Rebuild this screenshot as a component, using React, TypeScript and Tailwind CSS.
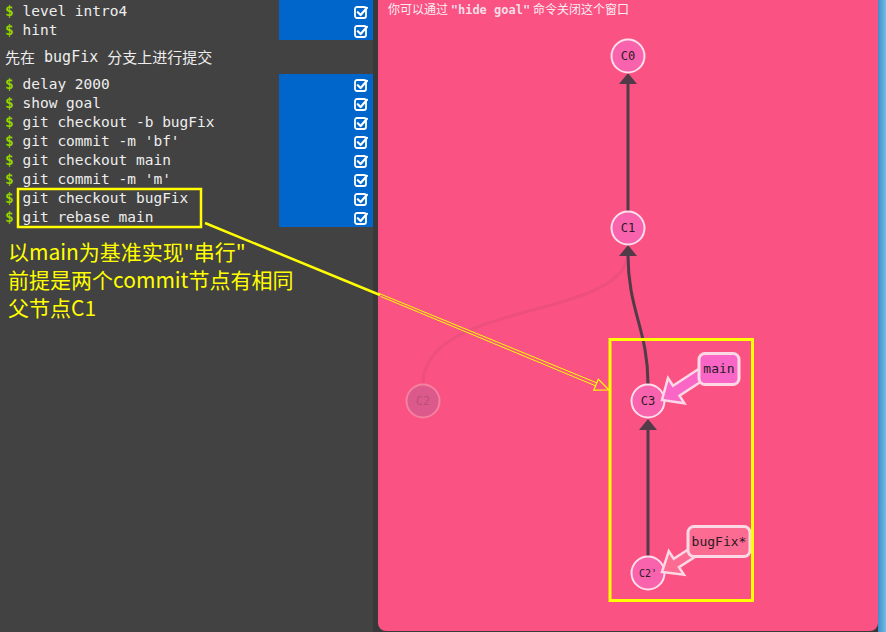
import React from "react";

const MONO = "font-['DejaVu_Sans_Mono','Noto_Sans_CJK_SC',monospace]";
const CJK = "font-['Noto_Sans_CJK_SC','Noto_Sans',sans-serif]";

function Check() {
  return (
    <svg width="14" height="14" viewBox="0 0 14 14">
      <rect x="1" y="2" width="11" height="11" rx="2" fill="none" stroke="#fff" strokeWidth="1.8" />
      <path d="M3.8 7.2 L6.6 10 L13 2.8" fill="none" stroke="#fff" strokeWidth="2.2" strokeLinecap="round" strokeLinejoin="round" />
    </svg>
  );
}

function Group({ cmds, pad }: { cmds: string[]; pad: string }) {
  return (
    <div className="flex">
      <div className={`flex flex-1 flex-col ${pad}`}>
        {cmds.map((c) => (
          <div key={c} className={`flex h-[19px] items-center whitespace-pre pl-[5px] text-[14.5px] leading-none text-[#eeeeee] ${MONO}`}>
            <span className="font-bold text-[#96d400]">$</span>
            <span> {c}</span>
          </div>
        ))}
      </div>
      <div className={`flex w-[94px] flex-col bg-[#0066cc] pr-[5px] ${pad}`}>
        {cmds.map((c) => (
          <div key={c} className="flex h-[19px] items-center justify-end">
            <Check />
          </div>
        ))}
      </div>
    </div>
  );
}

function arrowPts(sx: number, sy: number, tx: number, ty: number, bh: number, hh: number, hl: number) {
  const dx = tx - sx;
  const dy = ty - sy;
  const len = Math.hypot(dx, dy);
  const ux = dx / len;
  const uy = dy / len;
  const nx = -uy;
  const ny = ux;
  const hx = tx - ux * hl;
  const hy = ty - uy * hl;
  const p = [
    [sx + nx * bh, sy + ny * bh],
    [hx + nx * bh, hy + ny * bh],
    [hx + nx * hh, hy + ny * hh],
    [tx, ty],
    [hx - nx * hh, hy - ny * hh],
    [hx - nx * bh, hy - ny * bh],
    [sx - nx * bh, sy - ny * bh],
  ];
  return p.map((q) => q[0].toFixed(1) + "," + q[1].toFixed(1)).join(" ");
}

function Node({ x, y, label, small }: { x: number; y: number; label: string; small?: boolean }) {
  return (
    <g>
      <circle cx={x} cy={y} r={16.5} fill="#f963ad" stroke="#fde0ec" strokeWidth={2} />
      <text x={x} y={y + 4} textAnchor="middle" fontSize={small ? 10 : 12} fill="#2b1a24" className={MONO}>
        {label}
      </text>
    </g>
  );
}

export default function App() {
  const cmds1 = ["level intro4", "hint"];
  const cmds2 = [
    "delay 2000",
    "show goal",
    "git checkout -b bugFix",
    "git commit -m 'bf'",
    "git checkout main",
    "git commit -m 'm'",
    "git checkout bugFix",
    "git rebase main",
  ];
  const edge = "#523b48";
  return (
    <div className="relative flex h-[632px] w-[886px] overflow-hidden bg-[#393939]">
      <div className="flex w-[373px] flex-col bg-[#424242]">
        <Group cmds={cmds1} pad="pt-[2px]" />
        <div className={`flex h-[34px] items-center whitespace-pre pl-[5px] text-[15px] text-[#eeeeee] ${MONO}`}>
          <span className={CJK}>先在</span>
          <span> bugFix </span>
          <span className={CJK}>分支上进行提交</span>
        </div>
        <Group cmds={cmds2} pad="pt-[1px]" />
        <div className={`pl-[8px] pt-[10px] text-[21px] leading-[28px] text-[#ffff00] ${CJK}`}>
          <div>以main为基准实现"串行"</div>
          <div>前提是两个commit节点有相同</div>
          <div>父节点C1</div>
        </div>
      </div>
      <div className="w-[5px]" />
      <div className="relative h-[631px] w-[500px] rounded-b-[8px] bg-[#fa5283]">
        <svg className="absolute inset-0" width="500" height="631" viewBox="378 0 500 631">
          <path d="M423,384 C423,300 628,320 628,252" fill="none" stroke="#5a3048" strokeOpacity={0.08} strokeWidth={3} />
          <line x1={628} y1={84} x2={628} y2={211} stroke={edge} strokeWidth={3} />
          <polygon points="628,73 619,84 637,84" fill={edge} />
          <path d="M648,384 C648,330 628,310 628,255" fill="none" stroke={edge} strokeWidth={3} />
          <polygon points="628,245 619,256 637,256" fill={edge} />
          <line x1={648} y1={429} x2={648} y2={556} stroke={edge} strokeWidth={3} />
          <polygon points="648,419 639,430 657,430" fill={edge} />
          <Node x={628} y={56} label="C0" />
          <Node x={628} y={228} label="C1" />
          <g>
            <circle cx={423} cy={401} r={16.5} fill="#dc5a8b" stroke="#f5809f" strokeWidth={2} />
            <text x={423} y={405} textAnchor="middle" fontSize={12} fill="#b8507a" className={MONO}>
              C2
            </text>
          </g>
          <Node x={648} y={401} label="C3" />
          <Node x={648} y={573} label="C2'" small />
          <polygon points={arrowPts(708, 370, 662, 400, 6, 15, 17)} fill="#f966c6" stroke="#fdd9e6" strokeWidth={2.5} />
          <rect x={699} y={353.5} width={40} height={31} rx={6} fill="#f966c6" stroke="#fdd9e6" strokeWidth={3} />
          <text x={719} y={373} textAnchor="middle" fontSize={13} fill="#2b1a24" className={MONO}>
            main
          </text>
          <polygon points={arrowPts(706, 544, 662, 572, 5, 14, 17)} fill="#fb6b92" stroke="#fdd9e6" strokeWidth={2.5} />
          <rect x={688} y={526.5} width={62} height={30} rx={6} fill="#fb6b92" stroke="#fdd9e6" strokeWidth={3} />
          <text x={719} y={546} textAnchor="middle" fontSize={13} fill="#2b1a24" className={MONO}>
            bugFix*
          </text>
        </svg>
        <div className={`relative whitespace-pre pl-[10px] pt-[1px] text-[12px] leading-[16px] text-[#fbeef3] ${CJK}`}>
          你可以通过 <span className={`font-bold text-[#f5dde6] ${MONO}`}>"hide goal"</span> 命令关闭这个窗口
        </div>
      </div>
      <div className="w-[8px] bg-gradient-to-r from-[#3d8fcb] to-[#74bbe6]" />
      <svg className="pointer-events-none absolute left-0 top-0" width="886" height="632">
        <rect x={18} y={189} width={183} height={38} fill="none" stroke="#ffff00" strokeWidth={2.5} />
        <rect x={610} y={339.5} width={142.5} height={261} fill="none" stroke="#ffff00" strokeWidth={3} />
        <line x1={205} y1={223} x2={380} y2={295} stroke="#ffff00" strokeWidth={2.5} />
        <line x1={379.4} y1={293.6} x2={597} y2={383} stroke="#ffff00" strokeWidth={1} />
        <line x1={380.6} y1={296.4} x2={596} y2={386} stroke="#ffff00" strokeWidth={1} />
        <polygon points="598.3,379.2 609,390 593.7,390.2" fill="#fa5283" stroke="#ffff00" strokeWidth={1.2} />
      </svg>
    </div>
  );
}
